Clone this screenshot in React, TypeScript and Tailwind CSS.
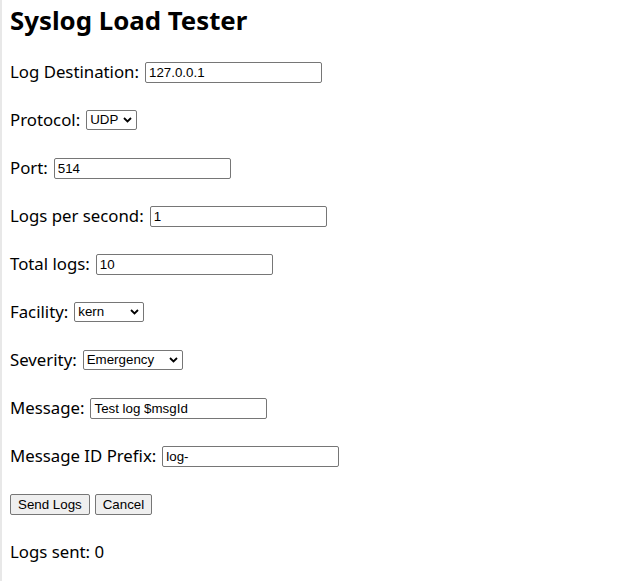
import React from "react";

const inputCls =
  "h-[21px] w-[177px] border border-[#767676] rounded-[2px] px-[3px] text-[13.33px] text-black bg-white outline-none";
const ctrlFont = { fontFamily: '"Liberation Sans", Arial, sans-serif' };

function Chevron() {
  return (
    <svg width="9" height="6" viewBox="0 0 9 6" className="shrink-0">
      <path d="M1 1 L4.5 4.5 L8 1" fill="none" stroke="#000" strokeWidth="1.8" />
    </svg>
  );
}

function Select({ value, width }: { value: string; width: string }) {
  return (
    <div
      className={`flex h-[20px] items-center justify-between border border-[#767676] rounded-[2px] bg-white pl-[3px] pr-[4px] text-[13.33px] text-black ${width}`}
      style={ctrlFont}
    >
      <span>{value}</span>
      <Chevron />
    </div>
  );
}

function Row({ label, children }: { label: string; children: React.ReactNode }) {
  return (
    <div className="flex h-[24px] items-center gap-[6px]">
      <span className="text-[16.8px] text-black">{label}</span>
      {children}
    </div>
  );
}

function TextInput({ value }: { value: string }) {
  return (
    <input className={inputCls} style={ctrlFont} defaultValue={value} readOnly />
  );
}

export default function App() {
  return (
    <div
      className="min-h-[581px] w-[617px] border-l-2 border-[#e8e8e8] bg-white pl-[8px]"
      style={{ fontFamily: '"Noto Sans", "Open Sans", sans-serif' }}
    >
      <h1 className="pt-[6px] text-[25.8px] font-bold leading-[28px] text-black">Syslog Load Tester</h1>
      <div className="mt-[26px] flex flex-col gap-[24px]">
        <Row label="Log Destination:">
          <TextInput value="127.0.0.1" />
        </Row>
        <Row label="Protocol:">
          <Select value="UDP" width="w-[51px]" />
        </Row>
        <Row label="Port:">
          <TextInput value="514" />
        </Row>
        <Row label="Logs per second:">
          <TextInput value="1" />
        </Row>
        <Row label="Total logs:">
          <TextInput value="10" />
        </Row>
        <Row label="Facility:">
          <Select value="kern" width="w-[70px]" />
        </Row>
        <Row label="Severity:">
          <Select value="Emergency" width="w-[100px]" />
        </Row>
        <Row label="Message:">
          <TextInput value="Test log $msgId" />
        </Row>
        <Row label="Message ID Prefix:">
          <TextInput value="log-" />
        </Row>
        <div className="flex h-[24px] items-center gap-[5px]" style={ctrlFont}>
          <button className="h-[21px] rounded-[2px] border border-[#767676] bg-[#efefef] px-[7px] text-[13.33px] text-black">
            Send Logs
          </button>
          <button className="h-[21px] rounded-[2px] border border-[#767676] bg-[#efefef] px-[7px] text-[13.33px] text-black">
            Cancel
          </button>
        </div>
        <div className="flex h-[24px] items-center text-[16.8px] text-black">Logs sent: 0</div>
      </div>
    </div>
  );
}
